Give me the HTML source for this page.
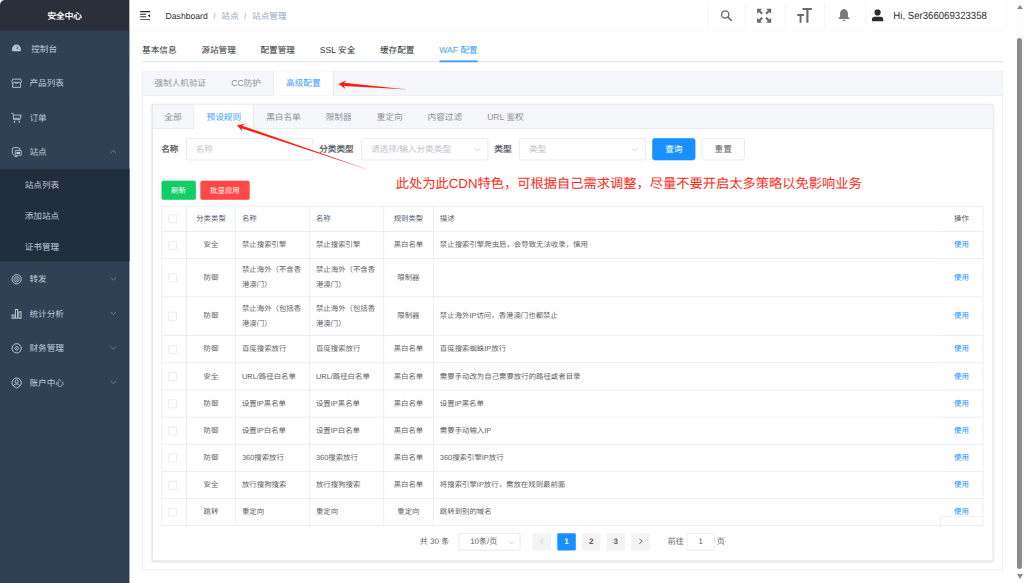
<!DOCTYPE html>
<html lang="zh-CN">
<head>
<meta charset="utf-8">
<title>安全中心 - 站点管理</title>
<style>
*{box-sizing:border-box;}
html,body{margin:0;padding:0;width:1024px;height:583px;overflow:hidden;background:#fff;}
body{font-family:"Liberation Sans",sans-serif;position:relative;text-rendering:geometricPrecision;}
#frame{position:absolute;left:0;top:0;width:1024px;height:583px;overflow:hidden;border-radius:5px 5px 0 0;background:#fff;}
#app{position:absolute;left:0;top:0;width:1661px;height:946px;transform:scale(0.6165);transform-origin:0 0;color:#606266;font-size:14px;background:#fff;}
/* sidebar */
#side{position:absolute;left:0;top:0;width:210px;height:946px;background:#304156;}
#logo{height:50px;line-height:52.500px;background:#2b2f3a;color:#fff;font-weight:700;font-size:14px;text-align:center;}
.mi{position:relative;height:56px;line-height:59px;color:#bfcbd9;font-size:14px;padding-left:47.800px;white-space:nowrap;}
.mi svg.ic{position:absolute;left:16.900px;top:19.400px;width:20px;height:20px;}
.mi svg.arr{position:absolute;left:178px;top:21.800px;width:12px;height:12px;}
#sub{background:#1f2d3d;}
.si{height:50px;line-height:52px;color:#bfcbd9;font-size:14px;padding-left:40px;}
/* navbar */
#nav{position:absolute;left:210px;top:0;width:1422px;height:50px;background:#fff;box-shadow:0 1px 4px rgba(0,21,41,.08);}
#ham{position:absolute;left:17px;top:17.600px;width:16.800px;height:14.800px;}
#bc{position:absolute;left:58.500px;top:0;line-height:52.300px;font-size:14px;white-space:nowrap;}
#bc b{font-weight:400;color:#303133;}
#bc i{font-style:normal;color:#c0c4cc;font-weight:700;margin:0 9px;}
#bc span{color:#97a8be;}
.nd{position:absolute;top:4px;width:1px;height:42px;background:#f0f0f0;}
.ni{position:absolute;}
#uname{position:absolute;left:1239.200px;top:0;line-height:51.400px;font-size:17px;color:#303133;white-space:nowrap;transform-origin:0 50%;transform:scaleX(.918);}
/* main */
#main{position:absolute;left:230.500px;top:60.700px;width:1396px;}
#tabs1{position:relative;height:40px;border-bottom:2px solid #e4e7ed;white-space:nowrap;}
#tabs1 span{display:inline-block;overflow:hidden;vertical-align:top;height:40px;line-height:40px;padding:0 20px;font-size:14px;color:#303133;}
#tabs1 span:first-child{padding-left:0;}
#tabs1 span.on{color:#409eff;}
#bar1{position:absolute;left:482px;bottom:-2px;height:2.400px;width:62.500px;background:#409eff;}
.card{position:relative;border:1px solid #dcdfe6;background:#fff;box-shadow:0 2px 4px 0 rgba(0,0,0,.12),0 0 6px 0 rgba(0,0,0,.04);}
.chead{height:39px;background:#f5f7fa;border-bottom:1px solid #e4e7ed;white-space:nowrap;font-size:0;}
.chead span{display:inline-block;overflow:hidden;vertical-align:top;height:39px;line-height:37.500px;padding:0 20px;font-size:14px;color:#909399;border:1px solid transparent;border-top:0;margin-left:-1.400px;}
.chead span:first-child{margin-left:-1px;padding-left:19px;}
.chead span.on{color:#409eff;background:#fff;border-right-color:#dcdfe6;border-left-color:#dcdfe6;}
#card1{margin-top:14px;height:810px;box-shadow:none;border-color:#e1e4ea;}
#card1>.cbody{padding:14px 15px 15px;}
#card2{height:741.700px;}
#card2>.cbody{padding:15px 15px 15px 14px;}#card2 .chead span{line-height:39.500px;}

/* form */
#frow{position:relative;height:36px;white-space:nowrap;font-size:0;}
#frow label{display:inline-block;vertical-align:top;height:36px;line-height:36px;font-size:14px;font-weight:700;color:#606266;padding-right:12px;}
.inp{display:inline-block;vertical-align:top;position:relative;width:206.200px;height:36px;line-height:34px;border:1px solid #dcdfe6;border-radius:4px;background:#fff;padding:0 15px;font-size:14px;color:#c0c4cc;margin-right:10px;}
.inp svg{position:absolute;right:10px;top:11px;width:13px;height:13px;}
.btn{display:inline-block;vertical-align:top;height:36px;line-height:34px;width:70px;text-align:center;border:1px solid #dcdfe6;border-radius:4px;font-size:14px;color:#606266;background:#fff;margin-right:10px;}
.btn.pri{background:#1890ff;border-color:#1890ff;color:#fff;}
#brow{margin-top:33px;height:31.500px;font-size:0;white-space:nowrap;}
.sb{display:inline-block;vertical-align:top;height:31.500px;line-height:30px;padding:0 15px;border:1px solid;border-radius:3px;font-size:12px;color:#fff;margin-right:7.300px;}
.sb.g{background:#13ce66;border-color:#13ce66;}
.sb.r{background:#ff4949;border-color:#ff4949;}
/* table */
#tw{position:relative;margin-top:9.500px;width:1333.500px;}#patch{position:absolute;right:0;bottom:0;width:69.800px;height:15.600px;background:#fff;border:1px solid #e6ebf2;}#tbl{border-collapse:separate;border-spacing:0;width:1333.5px;table-layout:fixed;border-top:1px solid #dfe6ec;border-left:1px solid #dfe6ec;font-size:12px;color:#606266;}
#tbl th,#tbl td{border-bottom:1px solid #dfe6ec;border-right:1px solid #dfe6ec;padding:0 10px;line-height:23px;text-align:left;font-weight:400;vertical-align:middle;overflow:hidden;}
#tbl th{height:41px;color:#515a6e;font-weight:500;}
#tbl td{height:44.050px;}
#tbl tr.two td{height:62.500px;}
#tbl .c{text-align:center;}#tbl .k{padding:0 0 0 10.500px;}
#tbl .nb{border-right-color:transparent;}
#tbl a{color:#1890ff;text-decoration:none;}
.ck{display:inline-block;width:14px;height:14px;border:1px solid #dcdfe6;border-radius:2px;background:#fff;vertical-align:middle;}
/* pagination */
#pg{position:relative;height:28px;margin-top:12px;font-size:13px;color:#606266;white-space:nowrap;}
#pg>*{position:absolute;top:0;height:28px;line-height:28px;}
.pb{width:30px;text-align:center;background:#f4f4f5;border-radius:2px;color:#606266;font-weight:700;font-size:13px;}
.pb.on{background:#1890ff;color:#fff;}
.pb svg{width:12px;height:12px;vertical-align:-1px;}

#note{position:absolute;left:395.800px;top:174px;font-size:13.250px;line-height:19px;color:#ff2a1a;white-space:nowrap;}
#sbar{position:absolute;left:1015.500px;top:0;width:8.500px;height:583px;background:#fcfcfc;}
#sbar .up{position:absolute;left:1.200px;top:4.900px;width:0;height:0;border-left:3px solid transparent;border-right:3px solid transparent;border-bottom:4.800px solid #8a8a8a;}
#sbar .dn{position:absolute;left:1.200px;top:574.200px;width:0;height:0;border-left:3.100px solid transparent;border-right:3.100px solid transparent;border-top:5.200px solid #8a8a8a;}
#sbar .th{position:absolute;left:1.700px;top:38px;width:5.100px;height:530.500px;border-radius:2.600px;background:#8c8c8c;}
</style>
</head>
<body>
<div id="frame">
<div id="app">
  <div id="side">
    <div id="logo">安全中心</div>
    <div class="mi" style="padding-left:50.500px"><svg class="ic" viewBox="0 0 20 20" style="transform:translate(-.3px,-1.400px) scale(.9,.97)"><path d="M2.7 15.6c-.5-1-.7-2-.7-3.100A8 8 0 0 1 18 12.500c0 1.100-.2 2.100-.7 3.100z" fill="#bfcbd9"/><g fill="#304156"><circle cx="5" cy="12.300" r=".8"/><circle cx="6.600" cy="8.400" r=".8"/><circle cx="10" cy="6.800" r=".8"/><circle cx="15" cy="12.300" r=".8"/><path d="M12.600 7.600 14 8.300 11.200 13.400 9.400 12.800z"/></g><circle cx="10.200" cy="13.300" r="1.300" fill="#bfcbd9"/></svg>控制台</div>
    <div class="mi"><svg class="ic" viewBox="0 0 20 20"><g fill="none" stroke="#bfcbd9" stroke-width="1.450"><path d="M3.600 3.300h12.800l1.500 4.200c0 1.300-1 2.200-2.200 2.200s-2-.9-2-2c0 1.100-1 2-2.100 2h-3.200c-1.100 0-2.100-.9-2.100-2 0 1.100-.9 2-2 2s-2.200-.9-2.200-2.200z"/><path d="M3.600 9.700v7h12.800v-7"/><path d="M7.800 7.600c0 1.200 1 2.100 2.200 2.100s2.200-.9 2.200-2.100"/></g></svg>产品列表</div>
    <div class="mi"><svg class="ic" viewBox="0 0 20 20"><g fill="none" stroke="#bfcbd9" stroke-width="1.450"><path d="M1.600 2.800h2.700l.9 10.300h11"/><path d="M5 5.700h12.200l-1.200 5.200h-10.600"/></g><circle cx="6.600" cy="16.700" r="1.300" fill="#bfcbd9"/><circle cx="14.300" cy="16.700" r="1.300" fill="#bfcbd9"/></svg>订单</div>
    <div class="mi"><svg class="ic" viewBox="0 0 20 20"><path d="M9 2.300c2.300 0 4.200.5 6 1.400v3M9 2.300c-2.300 0-4.200.5-6 1.400v5.800c0 3.700 2.600 6.500 6 7.900.6-.3 1.200-.6 1.700-1" fill="none" stroke="#bfcbd9" stroke-width="1.450"/><path d="M7.700 7h9.800v7.800h-4.300l-2.200 1.700v-1.700h-3.300z" fill="none" stroke="#bfcbd9" stroke-width="1.300"/><rect x="9.600" y="9.300" width="6" height="3.600" fill="#bfcbd9"/></svg>站点<svg class="arr" viewBox="0 0 12 12"><path d="M1.6 8.2 6 3.8 10.4 8.2" fill="none" stroke="#8a97a8" stroke-width="1.1"/></svg></div>
    <div id="sub">
      <div class="si">站点列表</div>
      <div class="si">添加站点</div>
      <div class="si">证书管理</div>
    </div>
    <div class="mi"><svg class="ic" viewBox="0 0 20 20"><g fill="none" stroke="#bfcbd9" stroke-width="1.500"><circle cx="10" cy="10" r="7.500"/><circle cx="10" cy="10" r="4.300" stroke-width="1.300"/><rect x="8.600" y="8" width="2.800" height="4" rx="1.200" stroke-width="1.100"/></g></svg>转发<svg class="arr" viewBox="0 0 12 12"><path d="M1.6 4 6 8.4 10.4 4" fill="none" stroke="#8a97a8" stroke-width="1.1"/></svg></div>
    <div class="mi"><svg class="ic" viewBox="0 0 20 20"><g fill="none" stroke="#bfcbd9" stroke-width="1.550"><rect x="2.600" y="11.800" width="3.300" height="5.400"/><rect x="8" y="3" width="3.600" height="14.200"/><rect x="13.600" y="6.800" width="3.600" height="10.400"/></g></svg>统计分析<svg class="arr" viewBox="0 0 12 12"><path d="M1.6 4 6 8.4 10.4 4" fill="none" stroke="#8a97a8" stroke-width="1.1"/></svg></div>
    <div class="mi"><svg class="ic" viewBox="0 0 20 20"><g fill="none" stroke="#bfcbd9" stroke-width="1.550"><circle cx="10" cy="10" r="7.500"/><path d="M10 6.400 13.600 10 10 13.600 6.400 10z"/></g><circle cx="10" cy="10" r="1" fill="#bfcbd9"/></svg>财务管理<svg class="arr" viewBox="0 0 12 12"><path d="M1.6 4 6 8.4 10.4 4" fill="none" stroke="#8a97a8" stroke-width="1.1"/></svg></div>
    <div class="mi"><svg class="ic" viewBox="0 0 20 20"><g fill="none" stroke="#bfcbd9" stroke-width="1.500"><path d="M10 18.600 7.600 17A7.600 7.600 0 1 1 12.400 17z"/><circle cx="10" cy="7.900" r="2.700"/><path d="M4.800 14.600c1-1.800 3-2.600 5.200-2.600s4.200.8 5.200 2.600"/></g></svg>账户中心<svg class="arr" viewBox="0 0 12 12"><path d="M1.6 4 6 8.4 10.4 4" fill="none" stroke="#8a97a8" stroke-width="1.1"/></svg></div>
  </div>
  <div id="nav">
    <svg id="ham" viewBox="0 0 17 15"><g fill="#2b2b2b"><rect x="0" y="0" width="17" height="1.700" rx=".8"/><rect x="0" y="4.200" width="10.500" height="1.700" rx=".8"/><rect x="0" y="8.400" width="10.500" height="1.700" rx=".8"/><rect x="0" y="12.900" width="17" height="1.700" rx=".8"/><path d="M17 4.600v5.800l-4.200-2.900z"/></g></svg>
    <div id="bc"><b>Dashboard</b><i>/</i><span>站点</span><i>/</i><span>站点管理</span></div>
    <i class="nd" style="left:939.400px"></i><i class="nd" style="left:997.600px"></i><i class="nd" style="left:1063px"></i><i class="nd" style="left:1127.400px"></i><i class="nd" style="left:1192.800px"></i>
    <svg class="ni" style="left:959px;top:16.300px;width:18.500px;height:18.500px" viewBox="0 0 18 18"><circle cx="7.200" cy="7.200" r="5.700" fill="none" stroke="#5f6368" stroke-width="2"/><path d="M11.400 11.400 16.800 16.800" stroke="#5f6368" stroke-width="2.300" stroke-linecap="round"/></svg>
    <svg class="ni" style="left:1017px;top:12.500px;width:25px;height:25px" viewBox="0 0 24 24"><g fill="#6a6a6a"><path d="M1 1h8l-2.800 2.800 4 4-2.400 2.400-4-4L1 9z"/><path d="M23 1v8l-2.800-2.800-4 4-2.400-2.400 4-4L15 1z"/><path d="M1 23v-8l2.800 2.800 4-4 2.400 2.400-4 4L9 23z"/><path d="M23 23h-8l2.800-2.800-4-4 2.400-2.400 4 4L23 15z"/></g></svg>
    <svg class="ni" style="left:1082.500px;top:12.700px;width:24.500px;height:24.500px" viewBox="0 0 24 24"><g fill="#6a6a6a"><path d="M8.500 0H24v3.200h-6V24h-3.400V3.200h-6.100z"/><path d="M0 9.600h10.800v3H7V24H3.900V12.600H0z"/></g></svg>
    <svg class="ni" style="left:1149px;top:13.800px;width:20px;height:21px" viewBox="0 0 20 21"><path d="M10 0c1 0 1.700.7 1.700 1.600 2.900.8 4.700 3.300 4.700 6.400v4.800l2.300 2.700v1.200H1.300v-1.200l2.300-2.700V8c0-3.100 1.800-5.600 4.700-6.400C8.300.7 9 0 10 0z" fill="#7a7a7a"/><path d="M7.600 18h4.800c0 1.400-1.100 2.400-2.400 2.400S7.600 19.400 7.600 18z" fill="#7a7a7a"/></svg>
    <svg class="ni" style="left:1203.500px;top:15px;width:19px;height:20px" viewBox="0 0 19 20"><circle cx="9.500" cy="5.200" r="5" fill="#2b2b2b"/><path d="M0 20v-3.200c0-2.800 2.200-4.600 5-4.600h9c2.800 0 5 1.800 5 4.600V20z" fill="#2b2b2b"/></svg>
    <div id="uname">Hi, Ser366069323358</div>
  </div>
  <div id="main">
    <div id="tabs1"><span style="width:76px">基本信息</span><span style="width:96px">源站管理</span><span style="width:96px">配置管理</span><span style="width:97.84px">SSL 安全</span><span style="width:96px">缓存配置</span><span class="on" style="width:102.48px">WAF 配置</span><div id="bar1"></div></div>
    <div class="card" id="card1">
      <div class="chead"><span style="width:125px">强制人机验证</span><span style="width:90.23px">CC防护</span><span class="on" style="width:98px">高级配置</span></div>
      <div class="cbody">
        <div class="card" id="card2">
          <div class="chead"><span style="width:69px">全部</span><span class="on" style="width:98px">预设规则</span><span style="width:98px">黑白名单</span><span style="width:84px">限制器</span><span style="width:84px">重定向</span><span style="width:98px">内容过滤</span><span style="width:101.39px">URL 鉴权</span></div>
          <div class="cbody" id="c2b">

<div id="frow"><label style="width:40px">名称</label><span class="inp">名称</span><label style="width:68px">分类类型</label><span class="inp">请选择/输入分类类型<svg viewBox="0 0 12 12"><path d="M2 4.2 6 8.2 10 4.2" fill="none" stroke="#c0c4cc" stroke-width="1.1"/></svg></span><label style="width:40px">类型</label><span class="inp">类型<svg viewBox="0 0 12 12"><path d="M2 4.2 6 8.2 10 4.2" fill="none" stroke="#c0c4cc" stroke-width="1.1"/></svg></span><span class="btn pri">查询</span><span class="btn">重置</span></div>
<div id="brow"><span class="sb g" style="width:56px">刷新</span><span class="sb r" style="width:80px">批量应用</span></div>
<div id="tw"><table id="tbl"><colgroup><col style="width:40.5px"><col style="width:79.5px"><col style="width:120px"><col style="width:120px"><col style="width:81px"><col><col style="width:70px"></colgroup>
<tr><th class="k"><i class="ck"></i></th><th class="c">分类类型</th><th>名称</th><th>名称</th><th class="c">规则类型</th><th class="nb">描述</th><th class="c">操作</th></tr>
<tr><td class="k"><i class="ck"></i></td><td class="c">安全</td><td>禁止搜索引擎</td><td>禁止搜索引擎</td><td class="c">黑白名单</td><td class="nb">禁止搜索引擎爬虫后，会导致无法收录，慎用</td><td class="c"><a>使用</a></td></tr>
<tr class="two"><td class="k"><i class="ck"></i></td><td class="c">防御</td><td>禁止海外（不含香港澳门）</td><td>禁止海外（不含香港澳门）</td><td class="c">限制器</td><td class="nb"></td><td class="c"><a>使用</a></td></tr>
<tr class="two"><td class="k"><i class="ck"></i></td><td class="c">防御</td><td>禁止海外（包括香港澳门）</td><td>禁止海外（包括香港澳门）</td><td class="c">限制器</td><td class="nb">禁止海外IP访问，香港澳门也都禁止</td><td class="c"><a>使用</a></td></tr>
<tr><td class="k"><i class="ck"></i></td><td class="c">防御</td><td>百度搜索放行</td><td>百度搜索放行</td><td class="c">黑白名单</td><td class="nb">百度搜索蜘蛛IP放行</td><td class="c"><a>使用</a></td></tr>
<tr><td class="k"><i class="ck"></i></td><td class="c">安全</td><td>URL/路径白名单</td><td>URL/路径白名单</td><td class="c">黑白名单</td><td class="nb">需要手动改为自己需要放行的路径或者目录</td><td class="c"><a>使用</a></td></tr>
<tr><td class="k"><i class="ck"></i></td><td class="c">防御</td><td>设置IP黑名单</td><td>设置IP黑名单</td><td class="c">黑白名单</td><td class="nb">设置IP黑名单</td><td class="c"><a>使用</a></td></tr>
<tr><td class="k"><i class="ck"></i></td><td class="c">防御</td><td>设置IP白名单</td><td>设置IP白名单</td><td class="c">黑白名单</td><td class="nb">需要手动输入IP</td><td class="c"><a>使用</a></td></tr>
<tr><td class="k"><i class="ck"></i></td><td class="c">防御</td><td>360搜索放行</td><td>360搜索放行</td><td class="c">黑白名单</td><td class="nb">360搜索引擎IP放行</td><td class="c"><a>使用</a></td></tr>
<tr><td class="k"><i class="ck"></i></td><td class="c">安全</td><td>放行搜狗搜索</td><td>放行搜狗搜索</td><td class="c">黑白名单</td><td class="nb">将搜索引擎IP放行，需放在规则最前面</td><td class="c"><a>使用</a></td></tr>
<tr><td class="k"><i class="ck"></i></td><td class="c">跳转</td><td>重定向</td><td>重定向</td><td class="c">重定向</td><td class="nb">跳转到别的域名</td><td class="c"><a>使用</a></td></tr>
</table><i id="patch"></i></div>
<div id="pg"><span style="left:419.4px">共 30 条</span><span style="left:482.1px;width:100px;border:1px solid #dcdfe6;border-radius:3px;line-height:26px;padding-left:18px;color:#606266">10条/页<svg viewBox="0 0 12 12" style="position:absolute;right:6.500px;top:8px;width:12px;height:12px"><path d="M2 4.200 6 8.200 10 4.200" fill="none" stroke="#c0c4cc" stroke-width="1.100"/></svg></span><span class="pb" style="left:602.2px"><svg viewBox="0 0 12 12"><path d="M7.800 1.800 3.600 6 7.800 10.200" fill="none" stroke="#c0c4cc" stroke-width="1.300"/></svg></span><span class="pb on" style="left:642.3px">1</span><span class="pb" style="left:682.5px">2</span><span class="pb" style="left:722.4px">3</span><span class="pb" style="left:762.7px"><svg viewBox="0 0 12 12"><path d="M4.200 1.800 8.400 6 4.200 10.200" fill="none" stroke="#303133" stroke-width="1.300"/></svg></span><span style="left:821.7px">前往</span><span style="left:852.0px;width:46px;border:1px solid #dcdfe6;border-radius:3px;line-height:26px;text-align:center">1</span><span style="left:901.2px">页</span></div>
          </div>
        </div>
      </div>
    </div>
  </div>
</div>
<svg id="ann" width="1024" height="583" viewBox="0 0 1024 583" style="position:absolute;left:0;top:0"><polygon points="338.5,84.0 346.3,80.3 344.1,82.7 407.5,89.5 343.8,86.1 345.6,88.9" fill="#ff2010"/><polygon points="236.9,125.3 245.0,123.8 242.3,125.7 370.5,170.6 241.4,128.2 242.4,131.4" fill="#ff2010"/></svg>
<div id="note">此处为此CDN特色，可根据自己需求调整，尽量不要开启太多策略以免影响业务</div>
<div id="sbar"><i class="up"></i><i class="th"></i><i class="dn"></i></div>
</div>
</body>
</html>
